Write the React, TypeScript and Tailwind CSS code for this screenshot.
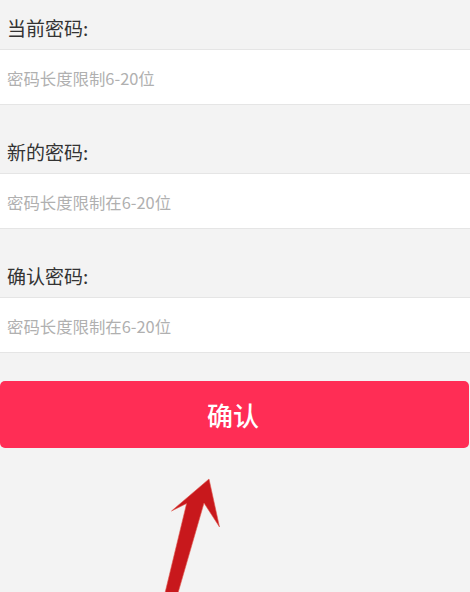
import React from "react";

const Field = ({ label, placeholder, first }: { label: string; placeholder: string; first?: boolean }) => (
  <div className="flex flex-col">
    <div
      className={`${first ? "h-[49px]" : "h-[68px]"} flex items-end px-[7px] pb-[9px] text-[19px] leading-[24px] text-[#333333]`}
    >
      {label}
    </div>
    <div className="h-[56px] bg-white border-y border-[#e5e5e5] flex items-center px-[7px] pt-[1px]">
      <input
        className="w-full bg-transparent outline-none text-[16.4px] leading-[20px] text-[#333] placeholder:text-[#b0b0b0]"
        placeholder={placeholder}
      />
    </div>
  </div>
);

export default function App() {
  return (
    <div className="relative w-[470px] h-[592px] overflow-hidden bg-[#f3f3f3] font-['Noto_Sans_CJK_SC','Noto_Sans',sans-serif]">
      <Field first label="当前密码:" placeholder="密码长度限制6-20位" />
      <Field label="新的密码:" placeholder="密码长度限制在6-20位" />
      <Field label="确认密码:" placeholder="密码长度限制在6-20位" />
      <button className="mt-[28px] h-[67px] w-[469px] rounded-[5px] bg-[#ff2d55] text-white text-[26px] leading-none font-medium flex items-center justify-center pr-[3px]">
        确认
      </button>
      <svg className="absolute left-0 top-0" width="470" height="592" viewBox="0 0 470 592">
        <polygon
          points="209,479 219.5,527 204,503 178,593 165,593 186.6,503.5 171.5,511"
          fill="#c8181c"
          stroke="#e0594f"
          strokeWidth="0.6"
          strokeLinejoin="miter"
        />
      </svg>
    </div>
  );
}
